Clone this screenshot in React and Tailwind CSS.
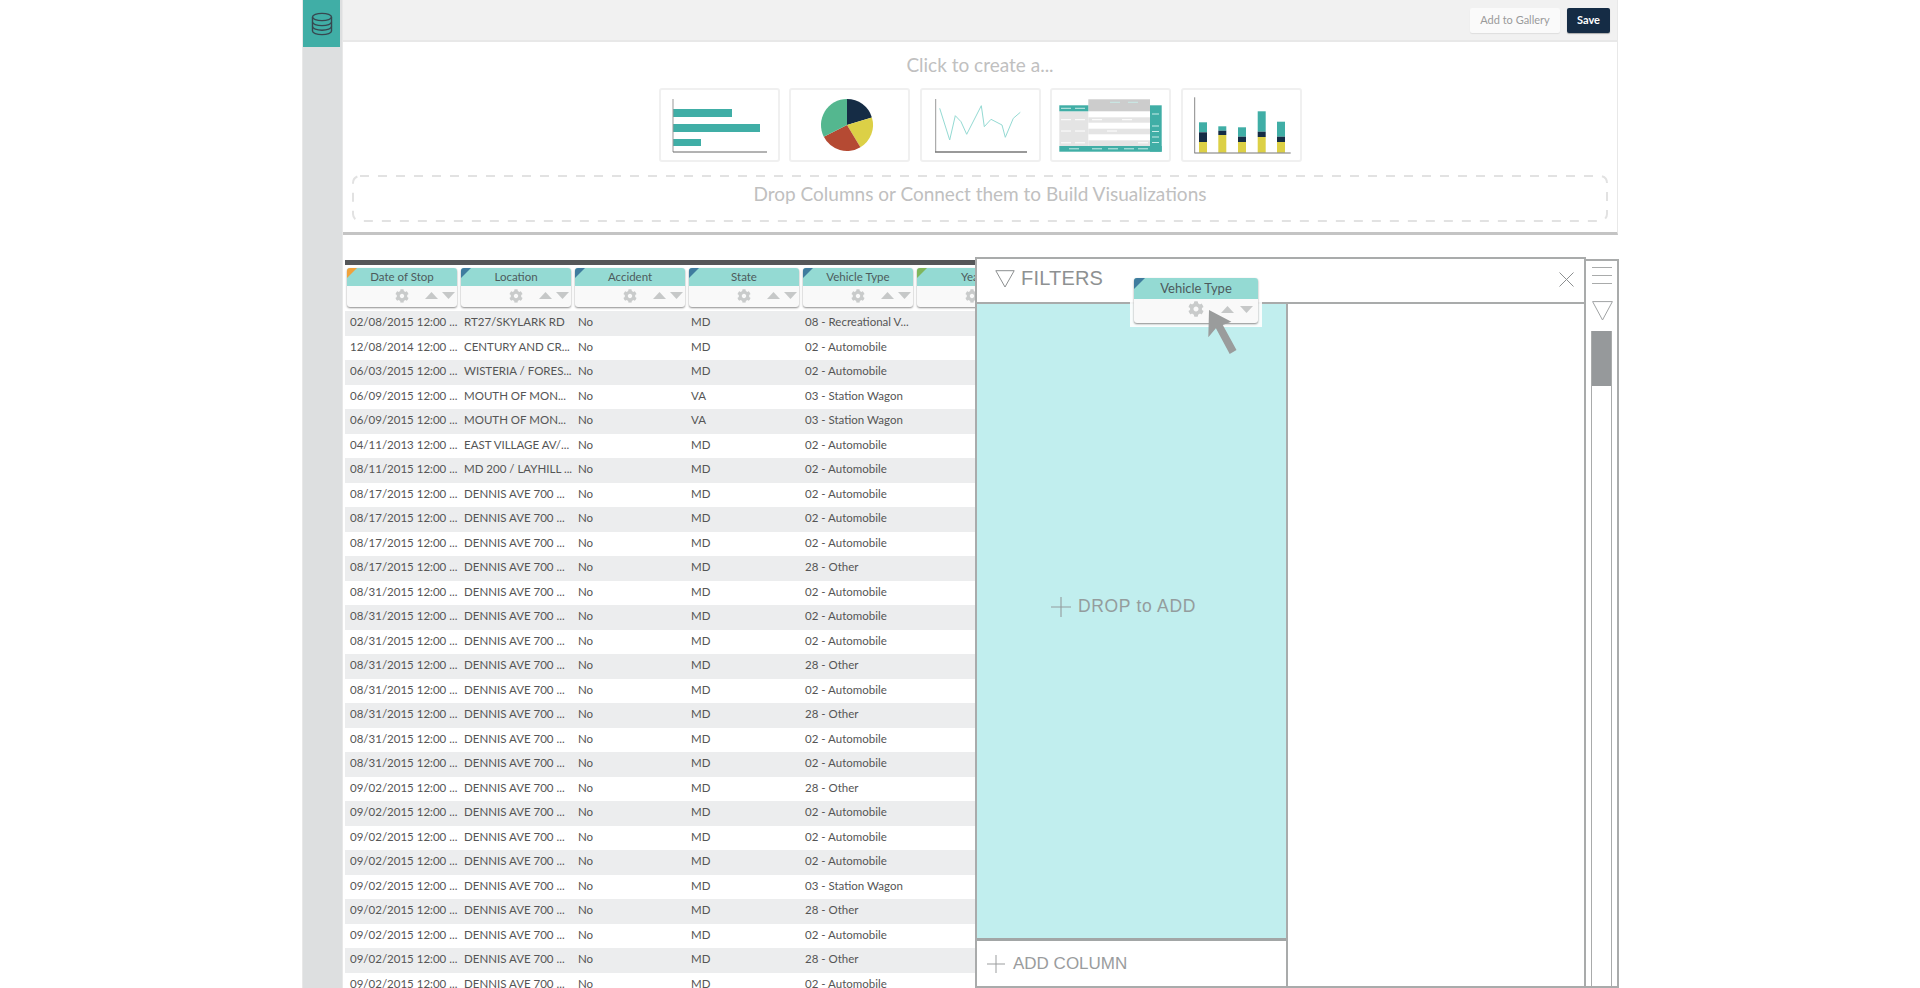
import React from 'react'
import { FaCog } from 'react-icons/fa'

const DATE_ROWS = [
  ['02/08/2015', 'RT27/SKYLARK RD', 'MD', '08 - Recreational V...'],
  ['12/08/2014', 'CENTURY AND CR...', 'MD', '02 - Automobile'],
  ['06/03/2015', 'WISTERIA / FORES...', 'MD', '02 - Automobile'],
  ['06/09/2015', 'MOUTH OF MON...', 'VA', '03 - Station Wagon'],
  ['06/09/2015', 'MOUTH OF MON...', 'VA', '03 - Station Wagon'],
  ['04/11/2013', 'EAST VILLAGE AV/...', 'MD', '02 - Automobile'],
  ['08/11/2015', 'MD 200 / LAYHILL ...', 'MD', '02 - Automobile'],
  ['08/17/2015', 'DENNIS AVE 700 ...', 'MD', '02 - Automobile'],
  ['08/17/2015', 'DENNIS AVE 700 ...', 'MD', '02 - Automobile'],
  ['08/17/2015', 'DENNIS AVE 700 ...', 'MD', '02 - Automobile'],
  ['08/17/2015', 'DENNIS AVE 700 ...', 'MD', '28 - Other'],
  ['08/31/2015', 'DENNIS AVE 700 ...', 'MD', '02 - Automobile'],
  ['08/31/2015', 'DENNIS AVE 700 ...', 'MD', '02 - Automobile'],
  ['08/31/2015', 'DENNIS AVE 700 ...', 'MD', '02 - Automobile'],
  ['08/31/2015', 'DENNIS AVE 700 ...', 'MD', '28 - Other'],
  ['08/31/2015', 'DENNIS AVE 700 ...', 'MD', '02 - Automobile'],
  ['08/31/2015', 'DENNIS AVE 700 ...', 'MD', '28 - Other'],
  ['08/31/2015', 'DENNIS AVE 700 ...', 'MD', '02 - Automobile'],
  ['08/31/2015', 'DENNIS AVE 700 ...', 'MD', '02 - Automobile'],
  ['09/02/2015', 'DENNIS AVE 700 ...', 'MD', '28 - Other'],
  ['09/02/2015', 'DENNIS AVE 700 ...', 'MD', '02 - Automobile'],
  ['09/02/2015', 'DENNIS AVE 700 ...', 'MD', '02 - Automobile'],
  ['09/02/2015', 'DENNIS AVE 700 ...', 'MD', '02 - Automobile'],
  ['09/02/2015', 'DENNIS AVE 700 ...', 'MD', '03 - Station Wagon'],
  ['09/02/2015', 'DENNIS AVE 700 ...', 'MD', '28 - Other'],
  ['09/02/2015', 'DENNIS AVE 700 ...', 'MD', '02 - Automobile'],
  ['09/02/2015', 'DENNIS AVE 700 ...', 'MD', '28 - Other'],
  ['09/02/2015', 'DENNIS AVE 700 ...', 'MD', '02 - Automobile'],
]

const COLUMNS = [
  { name: 'Date of Stop', corner: '#f0a23c' },
  { name: 'Location', corner: '#3f7c9e' },
  { name: 'Accident', corner: '#3f7c9e' },
  { name: 'State', corner: '#3f7c9e' },
  { name: 'Vehicle Type', corner: '#3f7c9e' },
  { name: 'Year', corner: '#7fb65c' },
]

const TEAL = '#40aea6'
const NAVY = '#152c45'
const YELLOW = '#dcd046'

const DatabaseIcon = () => (
  <svg width="22" height="24" viewBox="0 0 22 24" fill="none" stroke="#37474f" strokeWidth="1.4">
    <ellipse cx="11" cy="5" rx="9.5" ry="3.6" />
    <path d="M1.5 5v14c0 2 4.2 3.6 9.5 3.6s9.5-1.6 9.5-3.6V5" />
    <path d="M1.5 10c0 2 4.2 3.6 9.5 3.6s9.5-1.6 9.5-3.6" />
    <path d="M1.5 14.6c0 2 4.2 3.6 9.5 3.6s9.5-1.6 9.5-3.6" />
  </svg>
)

const BarsChart = () => (
  <svg width="117" height="70" viewBox="2 0 117 70">
    <rect x="14" y="19" width="59" height="8" fill={TEAL} />
    <rect x="14" y="34" width="87" height="8" fill={TEAL} />
    <rect x="14" y="49" width="28" height="7" fill={TEAL} />
    <path d="M14 9v53" stroke="#999" strokeWidth="1" />
    <path d="M14 62h94" stroke="#666" strokeWidth="1" />
  </svg>
)

const PieChart = () => (
  <svg width="117" height="70" viewBox="-56 -35 117 70">
    <path d="M0 0L0 -26A26 26 0 0 1 24.9 -7.6Z" fill={NAVY} />
    <path d="M0 0L24.9 -7.6A26 26 0 0 1 13.4 22.3Z" fill={YELLOW} />
    <path d="M0 0L13.4 22.3A26 26 0 0 1 -23.2 11.8Z" fill="#b54a33" />
    <path d="M0 0L-23.2 11.8A26 26 0 0 1 0 -26Z" fill="#54b78f" />
  </svg>
)

const LineChart = () => (
  <svg width="117" height="70" viewBox="2 2 117 70">
    <path d="M14 9v53" stroke="#999" strokeWidth="1" transform="translate(1.7 2)" />
    <path d="M15 64h92" stroke="#777" strokeWidth="1.4" />
    <polyline
      points="19.7,20.3 29.7,52 35.3,27.7 41,33.7 46.7,46.3 61.3,17.7 64.3,38.7 71,31.3 82,37 85.3,49.3 93.3,30.3 100.3,24.3"
      fill="none"
      stroke="#94dad3"
      strokeWidth="1"
    />
  </svg>
)

const TableChart = () => (
  <svg width="117" height="70" viewBox="2 2 117 70">
    <rect x="9.3" y="23.3" width="29" height="35" fill="#e4e4e4" />
    <rect x="38.3" y="11.3" width="61.7" height="12" fill="#ccc" />
    <rect x="38.3" y="29.3" width="61.7" height="5.4" fill="#e4e4e4" />
    <rect x="38.3" y="40.7" width="61.7" height="5.6" fill="#e4e4e4" />
    <rect x="38.3" y="52.3" width="61.7" height="5.7" fill="#e4e4e4" />
    <rect x="9.3" y="17.3" width="29" height="6" fill={TEAL} />
    <rect x="100" y="17.3" width="11.7" height="46.4" fill={TEAL} />
    <rect x="9.3" y="58" width="102.4" height="5.7" fill={TEAL} />
    <path d="M11 20.3h10M25 20.3h10M60 14.3h10M78 14.3h10M102 26h7M102 38h7M102 43.5h7M102 49h7M102 54.5h7M19 60.8h10M42 60.8h10M58 60.8h10M74 60.8h10M88 60.8h10" stroke="#c8ece8" strokeWidth="1" />
    <path d="M11 31.7h10M25 31.7h10M42 31.7h10M72 31.7h10M11 43h10M25 43h10M57 43h10M11 54.8h10M25 54.8h10M88 54.8h10" stroke="#fff" strokeWidth="1" />
  </svg>
)

const STACKS = [
  [18, 34.3, 44.3, 54],
  [37.3, 38.3, 42.7, 47],
  [57, 39.3, 48.7, 54],
  [76.7, 23.3, 43.7, 49],
  [96, 33.7, 48.7, 54],
]

const StackChart = () => (
  <svg width="117" height="70" viewBox="2 2 117 70">
    {STACKS.map(([x, a, b, c]) => (
      <g key={x}>
        <rect x={x} y={a} width="8" height={b - a} fill={TEAL} />
        <rect x={x} y={b} width="8" height={c - b} fill={NAVY} />
        <rect x={x} y={c} width="8" height={64.7 - c} fill={YELLOW} />
      </g>
    ))}
    <path d="M13.7 9.3v56" stroke="#888" strokeWidth="1" />
    <path d="M13.7 65h96" stroke="#777" strokeWidth="1" />
  </svg>
)

const ChartCard = ({ children }) => (
  <div className="w-[121px] h-[74px] border-2 border-[#f0f0f0] rounded-[3px] bg-white flex items-center justify-center">
    {children}
  </div>
)

const Arrow = ({ up }) => (
  <svg width="13" height="7" viewBox="0 0 13 7">
    <path d={up ? 'M6.5 0L13 7H0Z' : 'M0 0H13L6.5 7Z'} fill="#c6c8c8" />
  </svg>
)

const ColumnHeader = ({ name, corner }) => (
  <div className="relative w-[110px] shrink-0 rounded-[3px] overflow-hidden bg-[#f9f9f9] shadow-[0_1px_2px_rgba(0,0,0,0.45)]">
    <div className="h-[18px] bg-[#94dad3] flex items-center justify-center text-[11.5px] text-[#4d5a5c]">{name}</div>
    <div className="absolute left-0 top-0 w-0 h-0 border-t-[10px] border-r-[10px] border-r-transparent" style={{ borderTopColor: corner }} />
    <div className="h-[21px] relative flex items-center justify-center pb-[2px]">
      <FaCog size={14} color="#c9cbcb" />
      <div className="absolute left-[78px] top-[6px] flex gap-[4px]">
        <Arrow up />
        <Arrow />
      </div>
    </div>
  </div>
)

const Plus = ({ size }) => (
  <svg width={size} height={size} viewBox="0 0 20 20" stroke="currentColor" strokeWidth="1.1">
    <path d="M10 0v20M0 10h20" />
  </svg>
)

const FilterPanel = () => (
  <div className="absolute left-[630px] top-[-3px] flex h-[731px] bg-white">
    <div className="w-[611px] flex flex-col border-2 border-[#a9abab] bg-white">
      <div className="h-[45px] flex items-center border-b-[2px] border-[#a9abab] shrink-0 pl-[18px] pr-[10px]">
        <svg className="mb-[3px]" width="20" height="18" viewBox="0 0 20 18" fill="none" stroke="#8c8f90" strokeWidth="1">
          <path d="M0.8 0.7H19.2L10 17Z" />
        </svg>
        <span className="ml-[6px] mb-[5px] text-[20px] text-[#8e9192] tracking-[0.2px] font-['Liberation_Sans',sans-serif]">FILTERS</span>
        <svg className="ml-auto mb-[2px]" width="15" height="15" viewBox="0 0 15 15" stroke="#8c8f90" strokeWidth="1">
          <path d="M0.5 0.5L14.5 14.5M14.5 0.5L0.5 14.5" />
        </svg>
      </div>
      <div className="flex-1 flex min-h-0">
        <div className="w-[311px] flex flex-col border-r-2 border-[#a9abab]">
          <div className="flex-1 bg-[#c1eeee] border-b-[3px] border-[#a2a6a6] flex items-center justify-center text-[#949c9d] gap-[7px] pr-[16px] pb-[29px]">
            <Plus size={20} />
            <span className="text-[17.5px] tracking-[0.7px] font-['Liberation_Sans',sans-serif]">DROP to ADD</span>
          </div>
          <div className="h-[45px] shrink-0 flex items-center pl-[10px] gap-[8px] text-[#9a9c9d]">
            <Plus size={18} />
            <span className="text-[17px] font-['Liberation_Sans',sans-serif]">ADD COLUMN</span>
          </div>
        </div>
      </div>
    </div>
    <div className="w-[33px] mt-[2px] border-2 border-l-0 border-[#a9abab] pl-[5px] pr-[5px] pt-[6px] flex flex-col items-stretch">
      <div className="flex flex-col gap-[7px] ml-[1px]">
        <div className="h-[1px] bg-[#a9abab]" />
        <div className="h-[1px] bg-[#a9abab]" />
        <div className="h-[1px] bg-[#a9abab]" />
      </div>
      <svg className="mt-[17px] ml-[1px]" width="21" height="20" viewBox="0 0 21 20" fill="none" stroke="#a0a3a4" strokeWidth="1">
        <path d="M0.6 0.6H20.4L10.5 19Z" />
      </svg>
      <div className="mt-[10px] flex-1 border-x border-[#a9abab]">
        <div className="h-[55px] bg-[#96999b]" />
      </div>
    </div>
  </div>
)

const DataTable = () => (
  <div className="relative">
    <div className="h-[5px] w-[631px] bg-[#555759]" />
    <div className="w-[631px] overflow-hidden">
      <div className="flex gap-[4px] pl-[2px] pt-[3px] pb-[4px]">
        {COLUMNS.map((c) => (
          <ColumnHeader key={c.name} name={c.name} corner={c.corner} />
        ))}
      </div>
      {DATE_ROWS.map((r, i) => (
        <div key={i} className={`grid grid-cols-[114px_114px_113px_114px_176px] h-[24.5px] items-center text-[11.5px] text-[#555] pl-[5px] pb-[3px] ${i % 2 === 0 ? 'bg-[#ecedee]' : 'bg-white'}`}>
          <span>{r[0]} 12:00 ...</span>
          <span>{r[1]}</span>
          <span>No</span>
          <span>{r[2]}</span>
          <span>{r[3]}</span>
        </div>
      ))}
    </div>
    <FilterPanel />
    {/* column being dragged */}
    <div className="absolute left-[785px] top-[14px] bg-white/90 p-[4px]">
      <div className="relative w-[124px] rounded-[3px] overflow-hidden bg-[#f9f9f9] shadow-[0_1px_2px_rgba(0,0,0,0.45)]">
        <div className="h-[21px] bg-[#94dad3] flex items-center justify-center text-[13px] text-[#4d5a5c]">Vehicle Type</div>
        <div className="absolute left-0 top-0 w-0 h-0 border-t-[11px] border-r-[11px] border-r-transparent border-t-[#3f7c9e]" />
        <div className="h-[24px] relative flex items-center justify-center pb-[4px]">
          <FaCog size={16} color="#c9cbcb" />
          <div className="absolute left-[87px] top-[7px] flex gap-[6px]">
            <Arrow up />
            <Arrow />
          </div>
        </div>
      </div>
    </div>
    <svg className="absolute left-[860px] top-[46px]" width="36" height="52" viewBox="0 0 36 52">
      <path d="M4 4L26.4 15.7L17.8 19L31.5 44L24.7 48L10.9 22.3L3.3 31.3Z" fill="#9a9c9c" />
    </svg>
  </div>
)

const App = () => {
  return (
    <div className="h-[988px] overflow-hidden bg-white font-['Lato',sans-serif]">
      <div className="ml-[302px] w-[1316px] h-full flex">
        <div className="w-[40px] shrink-0 border-l border-[#e8e8e8] bg-[#dddfe0]">
          <div className="w-[37px] h-[47px] bg-[#40aea6] flex items-center justify-center">
            <DatabaseIcon />
          </div>
        </div>
        <div className="w-[1px] shrink-0 bg-[#e8e8e8]" />
        <div className="flex-1 min-w-0">
          <div className="h-[235px] border-b-[3px] border-[#c4c4c4] border-r border-r-[#e8e8e8]">
            <div className="h-[42px] bg-[#f1f1f1] border-b-2 border-[#e8e8e8] flex items-start justify-end gap-[7px] pt-[8px] pr-[7px]">
              <button className="w-[90px] h-[25px] bg-[#fafafa] rounded-[2px] text-[11px] text-[#9a9a9a] shadow-[0_1px_1px_rgba(0,0,0,0.08)]">Add to Gallery</button>
              <button className="w-[43px] h-[25px] bg-[#152c45] rounded-[2px] text-[11px] font-bold text-white shadow-[0_1px_1px_rgba(0,0,0,0.3)]">Save</button>
            </div>
            <p className="text-center text-[19px] text-[#c0c0c0] mt-[12px] leading-[22px]">Click to create a...</p>
            <div className="flex justify-center gap-[9.5px] mt-[12px]">
              <ChartCard><BarsChart /></ChartCard>
              <ChartCard><PieChart /></ChartCard>
              <ChartCard><LineChart /></ChartCard>
              <ChartCard><TableChart /></ChartCard>
              <ChartCard><StackChart /></ChartCard>
            </div>
            <div className="relative mx-[9px] mt-[13px] h-[47px] flex items-center justify-center text-[19px] text-[#c0c0c0] pb-[8px]">
              <svg className="absolute left-0 top-0" width="1256" height="47" fill="none" stroke="#e2e2e2" strokeWidth="2" strokeDasharray="9 9">
                <rect x="1" y="1" width="1254" height="45" rx="7" />
              </svg>
              Drop Columns or Connect them to Build Visualizations
            </div>
          </div>
          <div className="mt-[25px] ml-[2px]">
            <DataTable />
          </div>
        </div>
      </div>
    </div>
  )
}

export default App
